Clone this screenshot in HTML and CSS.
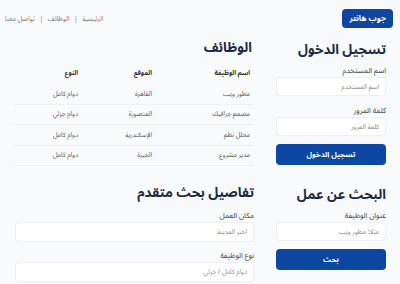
FILE: index.html
```html
<!DOCTYPE html>
<html lang="ar" dir="rtl">
<head>
    <meta charset="UTF-8">
    <meta name="viewport" content="width=device-width, initial-scale=1.0">
    <title>جوب هانتر</title>
    <link rel="stylesheet" href="styles.css">
</head>
<body>
    <header class="top-bar">
        <div class="logo">جوب هانتر</div>
        <nav class="nav-links">
            <a href="#">الرئيسية</a>
            <span class="sep">|</span>
            <a href="#">الوظائف</a>
            <span class="sep">|</span>
            <a href="#">تواصل معنا</a>
        </nav>
    </header>

    <main class="page">
        <aside class="sidebar">
            <section class="box">
                <h2>تسجيل الدخول</h2>
                <label for="username">اسم المستخدم</label>
                <input type="text" id="username" placeholder="اسم المستخدم">
                <label for="password">كلمة المرور</label>
                <input type="password" id="password" placeholder="كلمة المرور">
                <button type="button">تسجيل الدخول</button>
            </section>

            <section class="box search-box">
                <h2>البحث عن عمل</h2>
                <label for="jobTitle">عنوان الوظيفة</label>
                <input type="text" id="jobTitle" placeholder="مثلا: مطور ويب">
                <button type="button">بحث</button>
            </section>
        </aside>

        <div class="content">
            <section class="jobs">
                <h2>الوظائف</h2>
                <table class="jobs-table">
                    <thead>
                        <tr>
                            <th>اسم الوظيفة</th>
                            <th>الموقع</th>
                            <th>النوع</th>
                        </tr>
                    </thead>
                    <tbody>
                        <tr><td>مطور ويب</td><td>القاهرة</td><td>دوام كامل</td></tr>
                        <tr><td>مصمم جرافيك</td><td>المنصورة</td><td>دوام جزئي</td></tr>
                        <tr><td>محلل نظم</td><td>الإسكندرية</td><td>دوام كامل</td></tr>
                        <tr><td>مدير مشروع</td><td>الجيزة</td><td>دوام كامل</td></tr>
                    </tbody>
                </table>
            </section>

            <section class="advanced">
                <h2>تفاصيل بحث متقدم</h2>
                <label for="place">مكان العمل</label>
                <input type="text" id="place" placeholder="اختر المدينة">
                <label for="jobType">نوع الوظيفة</label>
                <input type="text" id="jobType" placeholder="دوام كامل / جزئي">
            </section>
        </div>
    </main>
</body>
</html>
```

FILE: styles.css
```css
body {
    margin: 0;
    background: #f9fafb;
    font-family: "Noto Sans Arabic", "Noto Kufi Arabic", "DejaVu Sans", sans-serif;
    color: #1c2b45;
}

.top-bar {
    display: flex;
    justify-content: space-between;
    align-items: center;
    padding: 9px 7px 0 5px;
}

.logo {
    background: #0d47a1;
    color: white;
    font-size: 8px;
    font-weight: bold;
    padding: 0 7px;
    height: 19px;
    line-height: 19px;
    border-radius: 4px;
}

.nav-links {
    font-size: 6.5px;
    color: #777;
    margin-top: 1px;
}

.nav-links a {
    color: #777;
    text-decoration: none;
}

.nav-links .sep {
    margin: 0 3px;
}

.page {
    display: grid;
    grid-template-columns: 110px 1fr;
    gap: 22px;
    padding: 0 14px;
}

h2 {
    margin: 0;
    font-size: 13.5px;
    line-height: 20px;
    font-weight: bold;
    color: #1c2b45;
    white-space: nowrap;
}

label {
    display: block;
    font-size: 7.5px;
    line-height: 9px;
    color: #3a3f47;
    margin-bottom: 1px;
}

input {
    display: block;
    width: 100%;
    box-sizing: border-box;
    height: 19px;
    border: 1px solid #eef0f3;
    border-radius: 4px;
    background: white;
    font-family: inherit;
    font-size: 6.5px;
    padding: 0 6px;
}

input::placeholder {
    color: #888;
}

button {
    display: block;
    width: 100%;
    height: 21px;
    background: #0d47a1;
    color: white;
    border: none;
    border-radius: 4px;
    font-family: inherit;
    font-size: 7.5px;
    font-weight: bold;
}

/* sidebar */
.box {
    padding-top: 12px;
}

.box h2 {
    margin-bottom: 7px;
}

.box input {
    margin-bottom: 11px;
}

.box button {
    margin-top: -3px;
}

.search-box {
    padding-top: 20px;
}

/* jobs */
.jobs {
    padding-top: 10px;
}

.jobs h2 {
    padding-right: 2px;
    margin-bottom: 6px;
}

.jobs-table {
    width: 100%;
    border-collapse: collapse;
    font-size: 6.5px;
    line-height: 9px;
}

.jobs-table th,
.jobs-table td {
    box-sizing: border-box;
    text-align: right;
}

.jobs-table th {
    font-weight: bold;
    color: #333;
    padding: 5px 4px 6px;
}

.jobs-table td {
    color: #555;
    padding: 5.5px 4px 5px;
    border-bottom: 1px solid #f0f1f3;
}

.jobs-table tr > :first-child {
    width: 98px;
}

.jobs-table tr > :nth-child(2) {
    width: 74px;
}

.advanced {
    padding-top: 17px;
    padding-left: 1px;
}

.advanced h2 {
    margin-bottom: 9px;
}

.advanced input {
    height: 20px;
    margin-bottom: 10px;
}
```
